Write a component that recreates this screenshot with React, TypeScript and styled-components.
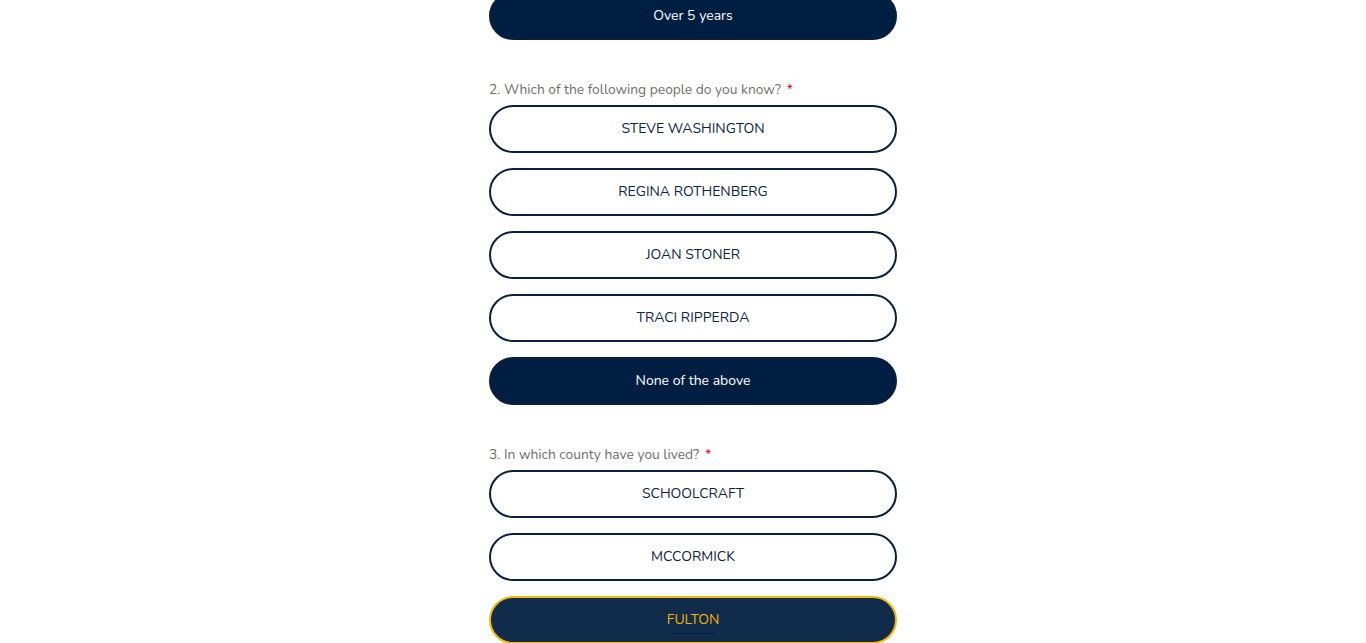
import React from 'react';
import styled, { createGlobalStyle } from 'styled-components';

const GlobalStyle = createGlobalStyle`
  html, body {
    margin: 0;
    padding: 0;
    background: #ffffff;
    overflow: hidden;
  }
  body {
    font-family: "Nunito", Lato, "Noto Sans", sans-serif;
  }
`;

const Page = styled.div`
  width: 428px;
  margin: -8px auto 0;
  padding-left: 20px;
  box-sizing: border-box;
  display: flex;
  flex-direction: column;
`;

const Section = styled.section`
  display: flex;
  flex-direction: column;
  gap: 15px;
  margin-bottom: 39px;
`;

const Question = styled.div`
  height: 20px;
  line-height: 20px;
  font-size: 13.8px;
  color: #6e6e6e;
  margin-top: 1px;
  margin-bottom: -10px;
`;

const Required = styled.span`
  color: #e8000b;
  margin-left: 6px;
`;

type Variant = 'outline' | 'selected' | 'focused';

const Option = styled.button<{ $variant: Variant }>`
  position: relative;
  height: 48px;
  width: 100%;
  box-sizing: border-box;
  border-radius: 24px;
  border: 2px solid
    ${(p) => (p.$variant === 'focused' ? '#f6b70a' : '#0a1f3f')};
  background: ${(p) =>
    p.$variant === 'outline'
      ? '#ffffff'
      : p.$variant === 'focused'
      ? '#112b4b'
      : '#001e42'};
  color: ${(p) =>
    p.$variant === 'outline'
      ? '#0d2342'
      : p.$variant === 'focused'
      ? '#f5b400'
      : '#ffffff'};
  font-family: inherit;
  font-size: 14px;
  text-align: center;
  cursor: pointer;
  padding: 0 0 2px;
`;

const OptionText = styled.span<{ $underline?: boolean }>`
  position: relative;
  &::after {
    content: '';
    display: ${(p) => (p.$underline ? 'block' : 'none')};
    position: absolute;
    left: 5px;
    right: 5px;
    bottom: -5px;
    height: 1px;
    background: #0a1a33;
  }
`;

const people = ['STEVE WASHINGTON', 'REGINA ROTHENBERG', 'JOAN STONER', 'TRACI RIPPERDA'];
const counties = ['SCHOOLCRAFT', 'MCCORMICK'];

const App: React.FC = () => {
  return (
    <>
      <GlobalStyle />
      <Page>
        <Section>
          <Option $variant="selected">
            <OptionText>Over 5 years</OptionText>
          </Option>
        </Section>

        <Section>
          <Question>
            2. Which of the following people do you know?<Required>*</Required>
          </Question>
          {people.map((name) => (
            <Option key={name} $variant="outline">
              <OptionText>{name}</OptionText>
            </Option>
          ))}
          <Option $variant="selected">
            <OptionText>None of the above</OptionText>
          </Option>
        </Section>

        <Section>
          <Question>
            3. In which county have you lived?<Required>*</Required>
          </Question>
          {counties.map((name) => (
            <Option key={name} $variant="outline">
              <OptionText>{name}</OptionText>
            </Option>
          ))}
          <Option $variant="focused">
            <OptionText $underline>FULTON</OptionText>
          </Option>
        </Section>
      </Page>
    </>
  );
};

export default App;
